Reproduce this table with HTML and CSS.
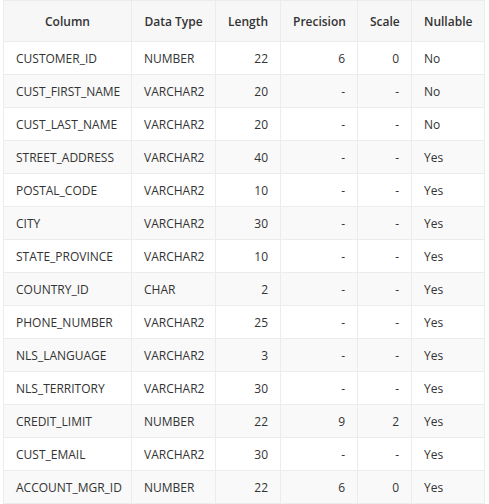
FILE: index.html
```html
<!DOCTYPE html>
<html>
<head>
<meta charset="utf-8">
<link rel="stylesheet" href="styles.css">
</head>
<body>
<table class="cols">
  <colgroup>
    <col class="c1"><col class="c2"><col class="c3"><col class="c4"><col class="c5"><col class="c6">
  </colgroup>
  <thead>
    <tr><th>Column</th><th>Data Type</th><th>Length</th><th>Precision</th><th>Scale</th><th>Nullable</th></tr>
  </thead>
  <tbody>
    <tr><td>CUSTOMER_ID</td><td>NUMBER</td><td class="num">22</td><td class="num">6</td><td class="num">0</td><td>No</td></tr>
    <tr><td>CUST_FIRST_NAME</td><td>VARCHAR2</td><td class="num">20</td><td class="num">-</td><td class="num">-</td><td>No</td></tr>
    <tr><td>CUST_LAST_NAME</td><td>VARCHAR2</td><td class="num">20</td><td class="num">-</td><td class="num">-</td><td>No</td></tr>
    <tr><td>STREET_ADDRESS</td><td>VARCHAR2</td><td class="num">40</td><td class="num">-</td><td class="num">-</td><td>Yes</td></tr>
    <tr><td>POSTAL_CODE</td><td>VARCHAR2</td><td class="num">10</td><td class="num">-</td><td class="num">-</td><td>Yes</td></tr>
    <tr><td>CITY</td><td>VARCHAR2</td><td class="num">30</td><td class="num">-</td><td class="num">-</td><td>Yes</td></tr>
    <tr><td>STATE_PROVINCE</td><td>VARCHAR2</td><td class="num">10</td><td class="num">-</td><td class="num">-</td><td>Yes</td></tr>
    <tr><td>COUNTRY_ID</td><td>CHAR</td><td class="num">2</td><td class="num">-</td><td class="num">-</td><td>Yes</td></tr>
    <tr><td>PHONE_NUMBER</td><td>VARCHAR2</td><td class="num">25</td><td class="num">-</td><td class="num">-</td><td>Yes</td></tr>
    <tr><td>NLS_LANGUAGE</td><td>VARCHAR2</td><td class="num">3</td><td class="num">-</td><td class="num">-</td><td>Yes</td></tr>
    <tr><td>NLS_TERRITORY</td><td>VARCHAR2</td><td class="num">30</td><td class="num">-</td><td class="num">-</td><td>Yes</td></tr>
    <tr><td>CREDIT_LIMIT</td><td>NUMBER</td><td class="num">22</td><td class="num">9</td><td class="num">2</td><td>Yes</td></tr>
    <tr><td>CUST_EMAIL</td><td>VARCHAR2</td><td class="num">30</td><td class="num">-</td><td class="num">-</td><td>Yes</td></tr>
    <tr><td>ACCOUNT_MGR_ID</td><td>NUMBER</td><td class="num">22</td><td class="num">6</td><td class="num">0</td><td>Yes</td></tr>
  </tbody>
</table>
</body>
</html>
```
FILE: styles.css
```css
html, body {
  margin: 0;
  padding: 0;
  background: #ffffff;
}
body {
  padding-left: 3px;
  font-family: "Open Sans", "Noto Sans", sans-serif;
  font-size: 12px;
  color: #333333;
}
.cols {
  border-collapse: collapse;
  table-layout: fixed;
  width: 482px;
}
.c1 { width: 128px; }
.c2 { width: 84px; }
.c3 { width: 65px; }
.c4 { width: 77px; }
.c5 { width: 54px; }
.c6 { width: 73px; }
.cols th,
.cols td {
  border: 1px solid #ececec;
  padding: 0 12px;
  white-space: nowrap;
  overflow: hidden;
}
.cols th {
  height: 40px;
  background: #f7f7f7;
  font-weight: 600;
  text-align: center;
}
.cols td {
  height: 32px;
  text-align: left;
}
.cols td.num {
  text-align: right;
}
.cols tbody tr:nth-child(even) td {
  background: #f9f9f9;
}
```
